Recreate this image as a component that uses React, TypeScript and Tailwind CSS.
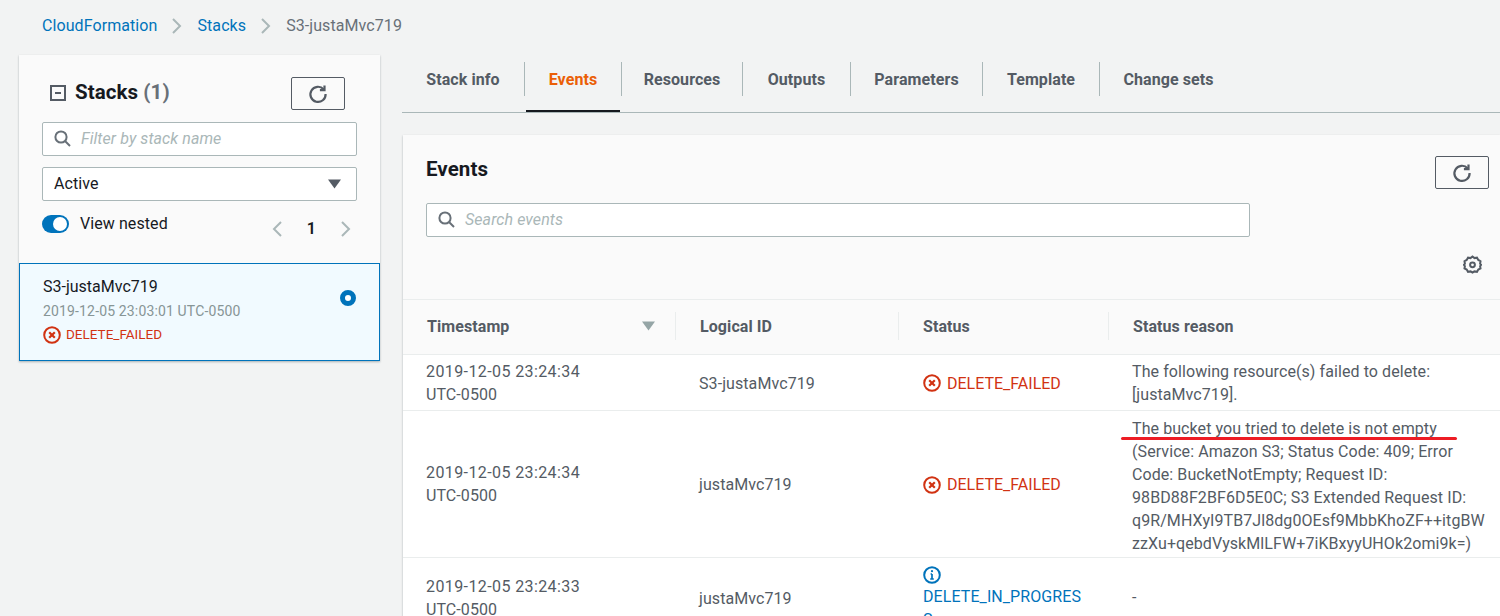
const FONT = "font-['Roboto',sans-serif]";

const TABS = [
  { name: "Stack info", width: "w-[122px]" },
  { name: "Events", width: "w-[97px]" },
  { name: "Resources", width: "w-[121px]" },
  { name: "Outputs", width: "w-[108px]" },
  { name: "Parameters", width: "w-[132px]" },
  { name: "Template", width: "w-[117px]" },
  { name: "Change sets", width: "w-[138px]" },
];

const ROWS = [
  { time: "2019-12-05 23:24:34", id: "S3-justaMvc719", height: "h-[56px]", failed: true },
  { time: "2019-12-05 23:24:34", id: "justaMvc719", height: "h-[147px]", failed: true },
  { time: "2019-12-05 23:24:33", id: "justaMvc719", height: "h-[80px]", failed: false },
];

function RefreshIcon() {
  return (
    <svg width="20" height="20" viewBox="0 0 20 20" fill="none" stroke="#545b64" strokeWidth="2.2">
      <path d="M15.6 5.2A7.6 7.6 0 1 0 17.6 10" />
      <path d="M16.5 1.5v4.6h-4.6" />
    </svg>
  );
}

function SearchIcon() {
  return (
    <svg width="17" height="17" viewBox="0 0 17 17" fill="none" stroke="#687078" strokeWidth="2">
      <circle cx="7" cy="7" r="5.6" />
      <path d="M11 11l5 5" />
    </svg>
  );
}

function ErrorIcon({ size = 18 }: { size?: number }) {
  return (
    <svg width={size} height={size} viewBox="0 0 18 18" fill="none" stroke="#d13212" className="shrink-0">
      <circle cx="9" cy="9" r="7.8" strokeWidth="2" />
      <path d="M6.2 6.2l5.6 5.6M11.8 6.2l-5.6 5.6" strokeWidth="2.2" />
    </svg>
  );
}

function InfoIcon() {
  return (
    <svg width="18" height="18" viewBox="0 0 18 18" fill="none" stroke="#0073bb" className="shrink-0">
      <circle cx="9" cy="9" r="7.8" strokeWidth="2" />
      <path d="M9 8v5M7.2 13h3.6M7.6 8h1.4" strokeWidth="1.7" />
      <circle cx="9" cy="5.2" r="1.1" fill="#0073bb" stroke="none" />
    </svg>
  );
}

function Chevron({ left = false, color = "#aab7b8" }: { left?: boolean; color?: string }) {
  return (
    <svg width="12" height="18" viewBox="0 0 12 18" fill="none" stroke={color} strokeWidth="2">
      <path d={left ? "M10 2L3 9l7 7" : "M2 2l7 7-7 7"} />
    </svg>
  );
}

function Caret({ color }: { color: string }) {
  return (
    <svg width="13" height="10" viewBox="0 0 13 10" fill={color}>
      <path d="M0 0.5h13L6.5 9.5z" />
    </svg>
  );
}

function GearIcon() {
  return (
    <svg width="19" height="19" viewBox="0 0 19 19" fill="none" stroke="#545b64" strokeWidth="2">
      <path d="M9.5 1.5l2 1.6 2.5-.4 1.3 2.2 2.2 1.3-.4 2.5 1 1-1 1.6.4 2.2-2.2 1.1-1.3 2.2-2.5-.4-2 1.1-2-1.1-2.5.4-1.3-2.2-2.2-1.1.4-2.2-1-1.6 1-1-.4-2.5 2.2-1.3 1.3-2.2 2.5.4z" />
      <circle cx="9.5" cy="9.8" r="2.4" />
    </svg>
  );
}

function RefreshButton() {
  return (
    <button className="flex h-[33px] w-[54px] items-center justify-center rounded-[2px] border border-[#545b64]">
      <RefreshIcon />
    </button>
  );
}

function Status({ failed }: { failed: boolean }) {
  if (failed) {
    return (
      <div className="flex items-center gap-[6px] tracking-normal text-[#d13212]">
        <ErrorIcon />
        <span>DELETE_FAILED</span>
      </div>
    );
  }
  return (
    <div className="text-[#0073bb]">
      <InfoIcon />
      <div className="mt-[1px] w-[159px] break-all">DELETE_IN_PROGRESS</div>
    </div>
  );
}

function Reason({ index }: { index: number }) {
  if (index === 0) {
    return <p>The following resource(s) failed to delete: [justaMvc719].</p>;
  }
  if (index === 1) {
    return (
      <div className="relative mt-[3px]">
        <p>The bucket you tried to delete is not empty</p>
        <p>(Service: Amazon S3; Status Code: 409; Error Code: BucketNotEmpty; Request ID: 98BD88F2BF6D5E0C; S3 Extended Request ID:</p>
        <p>q9R/MHXyI9TB7Jl8dg0OEsf9MbbKhoZF++itgBW</p>
        <p>zzXu+qebdVyskMlLFW+7iKBxyyUHOk2omi9k=)</p>
        <div className="absolute top-[20px] left-[-11px] h-[3px] w-[336px] rounded-full bg-[#ed1c24]" />
      </div>
    );
  }
  return <p>-</p>;
}

export default function App() {
  return (
    <div className={`${FONT} h-[616px] w-[1500px] overflow-hidden bg-[#f2f3f3] text-[16px] leading-[23px] tracking-[0.08px] text-[#545b64]`}>
      <nav className="flex h-[55px] items-start gap-[14px] pt-[14px] pl-[42px]">
        <a className="text-[#0073bb]">CloudFormation</a>
        <span className="pt-[3px]"><Chevron /></span>
        <a className="text-[#0073bb]">Stacks</a>
        <span className="pt-[3px]"><Chevron /></span>
        <span className="text-[#687078]">S3-justaMvc719</span>
      </nav>

      <div className="flex items-start">
        <aside className="mr-[22px] ml-[19px] w-[361px] shrink-0 bg-[#fafafa] shadow-[0_1px_2px_rgba(0,28,36,0.3)]">
          <div className="h-[208px] px-[23px] pt-[22px]">
            <div className="flex h-[33px] items-start justify-between pr-[12px]">
              <div className="flex items-center gap-[9px] pt-[4px] pl-[8px] text-[20.5px] font-bold text-[#16191f]">
                <span className="flex h-[16px] w-[16px] items-center justify-center border-2 border-[#545b64]">
                  <span className="h-[2px] w-[6px] bg-[#545b64]" />
                </span>
                <span>Stacks <span className="text-[#687078]">(1)</span></span>
              </div>
              <RefreshButton />
            </div>
            <div className="mt-[12px] flex h-[34px] items-center gap-[10px] rounded-[2px] border border-[#aab7b8] bg-white pb-[1px] pl-[11px] italic text-[#aab7b8]">
              <SearchIcon />
              <span>Filter by stack name</span>
            </div>
            <div className="mt-[11px] flex h-[34px] items-center justify-between rounded-[2px] border border-[#aab7b8] bg-white pr-[15px] pb-[1px] pl-[11px] text-[#16191f]">
              <span>Active</span>
              <Caret color="#545b64" />
            </div>
            <div className="mt-[11px] flex items-start justify-between pr-[5px]">
              <div className="flex items-center gap-[11px] text-[#16191f]">
                <span className="flex h-[18px] w-[27px] items-center justify-end rounded-full bg-[#0073bb] pr-[2px]">
                  <span className="h-[14px] w-[14px] rounded-full bg-white" />
                </span>
                <span>View nested</span>
              </div>
              <div className="flex items-center gap-[24px] pt-[5px] font-semibold text-[#16191f]">
                <Chevron left />
                <span>1</span>
                <Chevron />
              </div>
            </div>
          </div>
          <div className="flex h-[98px] items-start justify-between border border-[#0073bb] bg-[#f1faff] pt-[11px] pr-[23px] pl-[23px]">
            <div>
              <div className="tracking-normal text-[#16191f]">S3-justaMvc719</div>
              <div className="pt-[1px] text-[14px] leading-[25px] tracking-[0.15px] text-[#879596]">2019-12-05 23:03:01 UTC-0500</div>
              <div className="flex items-center gap-[5px] text-[13.5px] leading-[21px] tracking-normal text-[#d13212]">
                <ErrorIcon />
                <span>DELETE_FAILED</span>
              </div>
            </div>
            <span className="mt-[15px] flex h-[16px] w-[16px] items-center justify-center rounded-full border-[5px] border-[#0073bb] bg-white" />
          </div>
        </aside>

        <main className="min-w-0 flex-1">
          <div className="h-[58px] border-b border-[#aab7b8]">
            <div className="flex h-[57px] items-start pt-[7px]">
              {TABS.map((tab, i) => (
                <div key={tab.name} className={`relative h-[50px] font-bold ${tab.width} ${i === 1 ? "text-[#eb5f07]" : ""}`}>
                  <div className={`flex h-[34px] items-center justify-center ${i > 0 ? "border-l border-[#aab7b8]" : ""}`}>{tab.name}</div>
                  {i === 1 && <div className="absolute right-[1px] bottom-0 left-[2px] h-[2px] bg-[#16191f]" />}
                </div>
              ))}
            </div>
          </div>

          <section className="mt-[22px] ml-[1px] bg-[#fafafa] shadow-[0_1px_2px_rgba(0,28,36,0.3)]">
            <div className="h-[164px] pt-[21px] pr-[11px] pl-[23px]">
              <div className="flex items-start justify-between">
                <h2 className="text-[20.5px] leading-[26px] font-bold text-[#16191f]">Events</h2>
                <RefreshButton />
              </div>
              <div className="mt-[14px] flex h-[34px] w-[824px] items-center gap-[10px] rounded-[2px] border border-[#aab7b8] bg-white pb-[1px] pl-[11px] italic text-[#aab7b8]">
                <SearchIcon />
                <span>Search events</span>
              </div>
              <div className="mt-[18px] flex justify-end pr-[7px]">
                <GearIcon />
              </div>
            </div>

            <div className="flex h-[56px] items-center border-y border-[#eaeded] pb-[2px] font-bold">
              <div className="flex h-[28px] w-[273px] items-center justify-between border-r border-[#eaeded] pr-[20px] pl-[24px]">
                <span>Timestamp</span>
                <Caret color="#95a5a6" />
              </div>
              <div className="flex h-[28px] w-[223px] items-center border-r border-[#eaeded] pl-[24px]">Logical ID</div>
              <div className="flex h-[28px] w-[210px] items-center border-r border-[#eaeded] pl-[24px]">Status</div>
              <div className="pl-[24px]">Status reason</div>
            </div>

            {ROWS.map((row, i) => (
              <div key={i} className={`flex items-center border-b border-[#eaeded] bg-white ${row.height}`}>
                <div className="w-[273px] pl-[23px]">
                  <span className="tracking-[0.4px]">{row.time}</span>
                  <br />UTC-0500
                </div>
                <div className="w-[223px] pt-[1px] pl-[23px]">{row.id}</div>
                <div className="w-[210px] pt-[1px] pl-[24px]"><Status failed={row.failed} /></div>
                <div className="w-[391px] pr-[16px] pl-[23px]"><Reason index={i} /></div>
              </div>
            ))}
          </section>
        </main>
      </div>
    </div>
  );
}
